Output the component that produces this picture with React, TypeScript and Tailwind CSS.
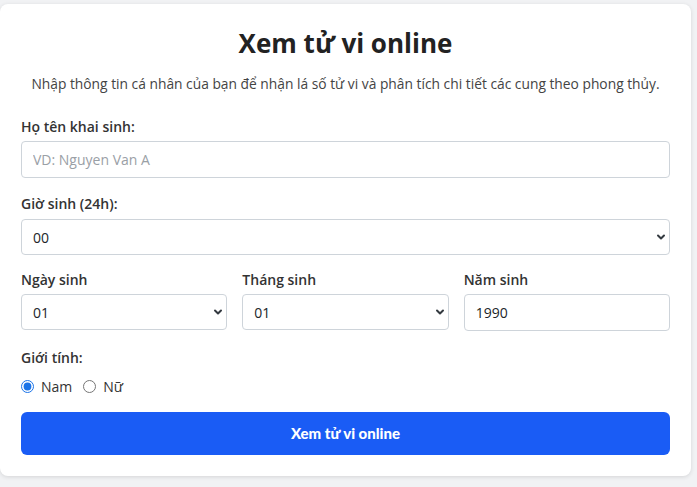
import { ChevronDown } from "lucide-react";

const font = { fontFamily: '"Open Sans", "Noto Sans", sans-serif' };

function SelectBox({ value }: { value: string }) {
  return (
    <div className="relative">
      <select
        defaultValue={value}
        className="w-full h-[36px] appearance-none rounded-[4px] border border-[#ced4da] bg-white pl-[11px] pr-8 text-[14px] text-[#212529] outline-none"
      >
        <option value={value}>{value}</option>
      </select>
      <ChevronDown
        size={12}
        strokeWidth={4}
        className="pointer-events-none absolute right-[3px] top-1/2 -translate-y-1/2 text-[#343a40]"
      />
    </div>
  );
}

export default function App() {
  return (
    <div className="min-h-[487px] bg-[#f1f2f4] pt-[4px] pr-[6px] pb-[10px]" style={font}>
      <div className="w-[691px] rounded-[8px] bg-white px-[21px] pt-[22px] pb-[21px] shadow-[0_1px_4px_rgba(0,0,0,0.12)]">
        <h1 className="text-center text-[26px] font-bold leading-[34px] text-[#222]">Xem tử vi online</h1>
        <p className="mt-[14px] text-center text-[13.8px] leading-[20px] text-[#444]">
          Nhập thông tin cá nhân của bạn để nhận lá số tử vi và phân tích chi tiết các cung theo phong thủy.
        </p>

        <div className="mt-[23px]">
          <label className="block text-[14px] font-semibold leading-[20px] text-[#333]">Họ tên khai sinh:</label>
          <input
            placeholder="VD: Nguyen Van A"
            className="mt-[4px] block h-[37px] w-full rounded-[4px] border border-[#ced4da] px-[11px] text-[14px] text-[#212529] placeholder-[#9aa0a6] outline-none"
          />
        </div>

        <div className="mt-[16px]">
          <label className="block text-[14px] font-semibold leading-[20px] text-[#333]">Giờ sinh (24h):</label>
          <div className="mt-[5px]">
            <SelectBox value="00" />
          </div>
        </div>

        <div className="mt-[15px] grid grid-cols-3 gap-[15px]">
          <div>
            <label className="block text-[14px] font-semibold leading-[20px] text-[#333]">Ngày sinh</label>
            <div className="mt-[4px]">
              <SelectBox value="01" />
            </div>
          </div>
          <div>
            <label className="block text-[14px] font-semibold leading-[20px] text-[#333]">Tháng sinh</label>
            <div className="mt-[4px]">
              <SelectBox value="01" />
            </div>
          </div>
          <div>
            <label className="block text-[14px] font-semibold leading-[20px] text-[#333]">Năm sinh</label>
            <input
              defaultValue="1990"
              className="mt-[4px] block h-[37px] w-full rounded-[4px] border border-[#ced4da] px-[11px] text-[14px] text-[#212529] outline-none"
            />
          </div>
        </div>

        <div className="mt-[17px]">
          <label className="block text-[14px] font-semibold leading-[20px] text-[#333]">Giới tính:</label>
          <div className="mt-[8px] flex items-center text-[14px] text-[#333]">
            <label className="flex items-center gap-[7px]">
              <input type="radio" name="gt" defaultChecked className="m-0 h-[13px] w-[13px] accent-[#1a73e8]" />
              Nam
            </label>
            <label className="ml-[11px] flex items-center gap-[7px]">
              <input type="radio" name="gt" className="m-0 h-[13px] w-[13px]" />
              Nữ
            </label>
          </div>
        </div>

        <button
          className="mt-[15px] h-[43px] w-full rounded-[6px] bg-[#1a5cf5] text-[15px] font-black text-white"
          style={{ fontFamily: '"Lato", "Open Sans", sans-serif' }}
        >
          Xem tử vi online
        </button>
      </div>
    </div>
  );
}
